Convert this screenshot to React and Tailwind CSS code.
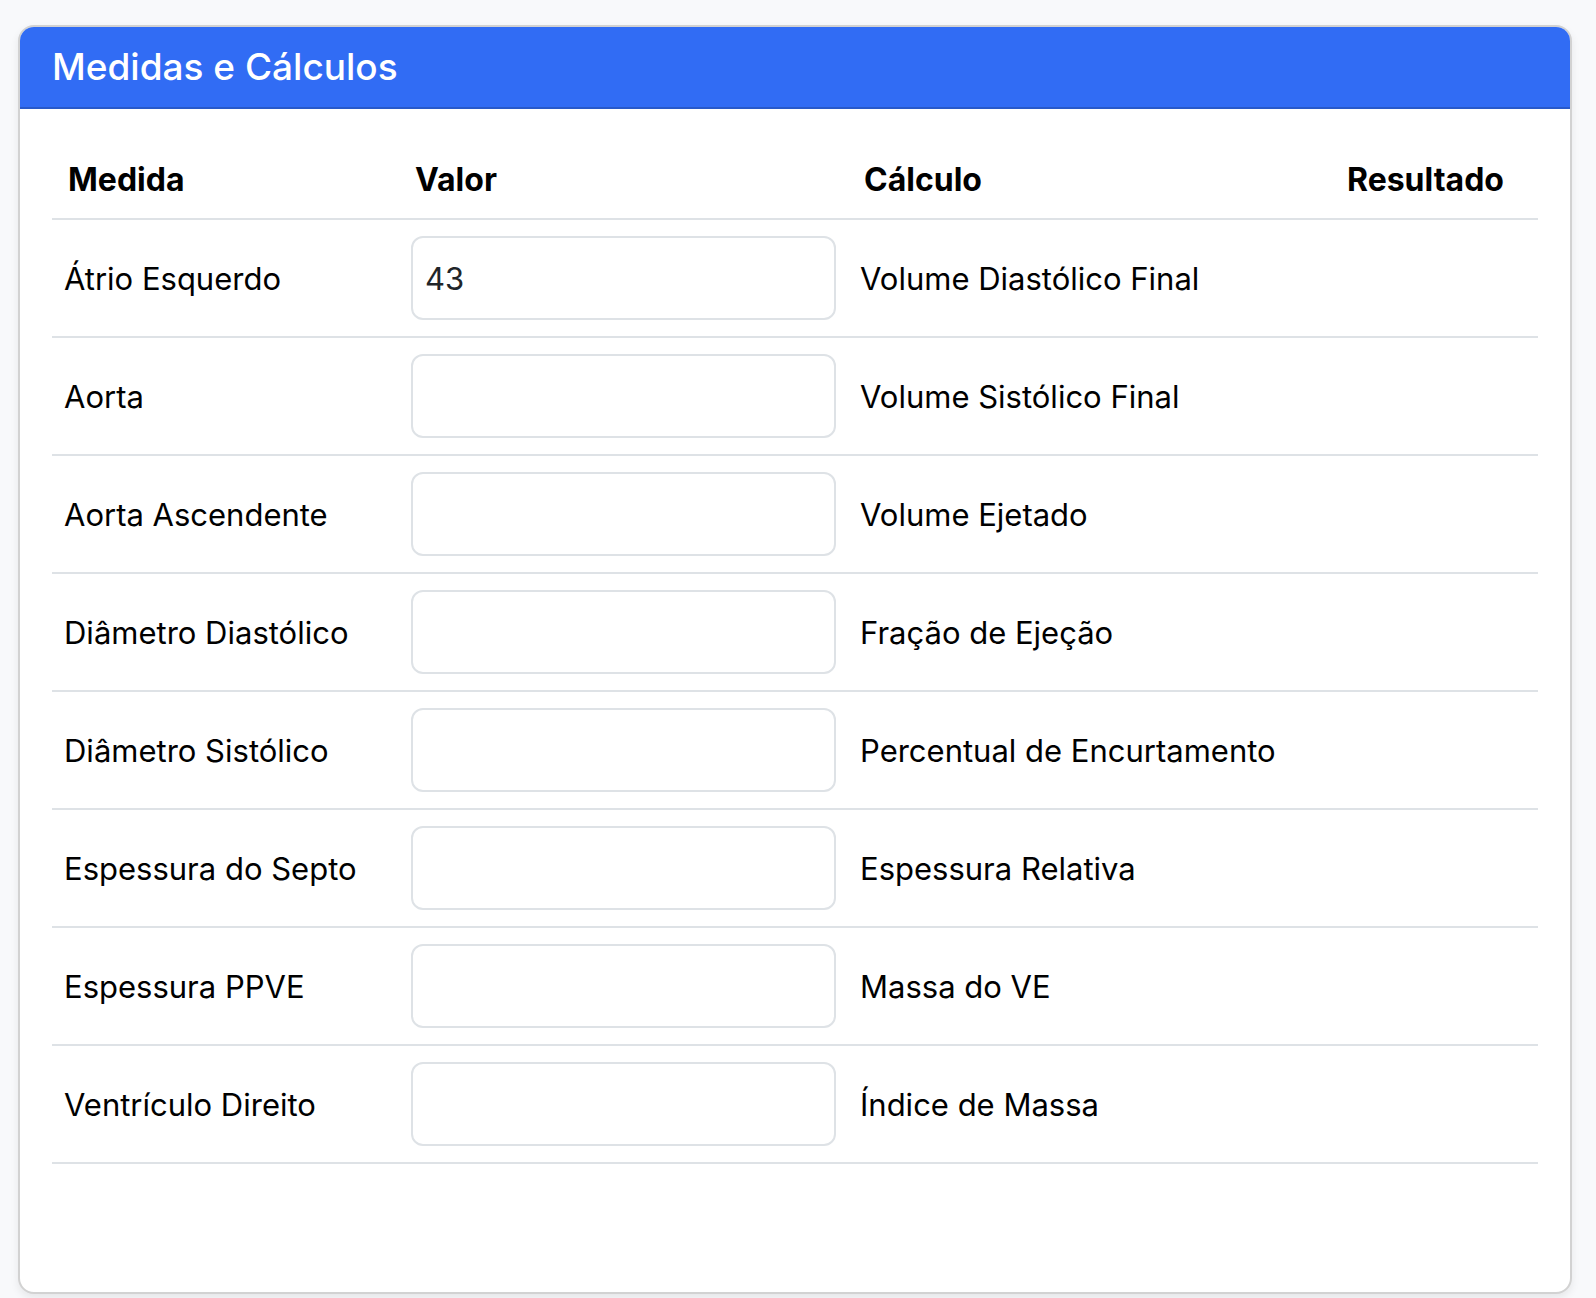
import { useState } from "react";

const rows = [
  { id: "atrio", medida: "Átrio Esquerdo", valor: "43", calculo: "Volume Diastólico Final" },
  { id: "aorta", medida: "Aorta", valor: "", calculo: "Volume Sistólico Final" },
  { id: "aorta-ascendente", medida: "Aorta Ascendente", valor: "", calculo: "Volume Ejetado" },
  { id: "diametro-diastolico", medida: "Diâmetro Diastólico", valor: "", calculo: "Fração de Ejeção" },
  { id: "diametro-sistolico", medida: "Diâmetro Sistólico", valor: "", calculo: "Percentual de Encurtamento" },
  { id: "septo", medida: "Espessura do Septo", valor: "", calculo: "Espessura Relativa" },
  { id: "ppve", medida: "Espessura PPVE", valor: "", calculo: "Massa do VE" },
  { id: "ventriculo", medida: "Ventrículo Direito", valor: "", calculo: "Índice de Massa" },
];

const headings = ["Medida", "Valor", "Cálculo", "Resultado"];

function Cell({ children }) {
  return <td className="border-b-2 border-[#dee2e6] px-3 py-4">{children}</td>;
}

function MeasureRow({ row }) {
  const [value, setValue] = useState(row.valor);
  return (
    <tr>
      <Cell>
        <label htmlFor={row.id}>{row.medida}</label>
      </Cell>
      <Cell>
        <input
          id={row.id}
          type="text"
          inputMode="decimal"
          value={value}
          onChange={(e) => setValue(e.target.value)}
          className="block h-[84px] w-full rounded-xl border-2 border-[#dee2e6] bg-white px-3 text-[31px] text-[#212529] outline-none focus:border-[#86b7fe]"
        />
      </Cell>
      <Cell>{row.calculo}</Cell>
      <Cell />
    </tr>
  );
}

export default function App() {
  return (
    <main className="min-h-screen bg-[#f8f9fb] pt-[25px] pr-6 pb-1 pl-[18px] font-[Inter,sans-serif] text-black">
      <section className="overflow-hidden rounded-2xl border-2 border-[#d2d2d2] bg-white shadow-[0_4px_8px_rgba(0,0,0,0.075)]">
        <header className="border-b-2 border-[#2859c9] bg-[#316cf4] px-8 py-4">
          <h5 className="text-[37px] leading-[48px] font-medium text-white">Medidas e Cálculos</h5>
        </header>
        <div className="px-8 pt-8 pb-32">
          <table className="w-full table-fixed border-separate border-spacing-0 text-left text-[31px] leading-[45px]">
            <colgroup>
              <col className="w-[347px]" />
              <col className="w-[449px]" />
              <col />
              <col className="w-[207px]" />
            </colgroup>
            <thead>
              <tr>
                {headings.map((heading) => (
                  <th
                    key={heading}
                    scope="col"
                    className="border-b-2 border-[#dee2e6] p-4 text-[32px] font-bold"
                  >
                    {heading}
                  </th>
                ))}
              </tr>
            </thead>
            <tbody>
              {rows.map((row) => (
                <MeasureRow key={row.id} row={row} />
              ))}
            </tbody>
          </table>
        </div>
      </section>
    </main>
  );
}
